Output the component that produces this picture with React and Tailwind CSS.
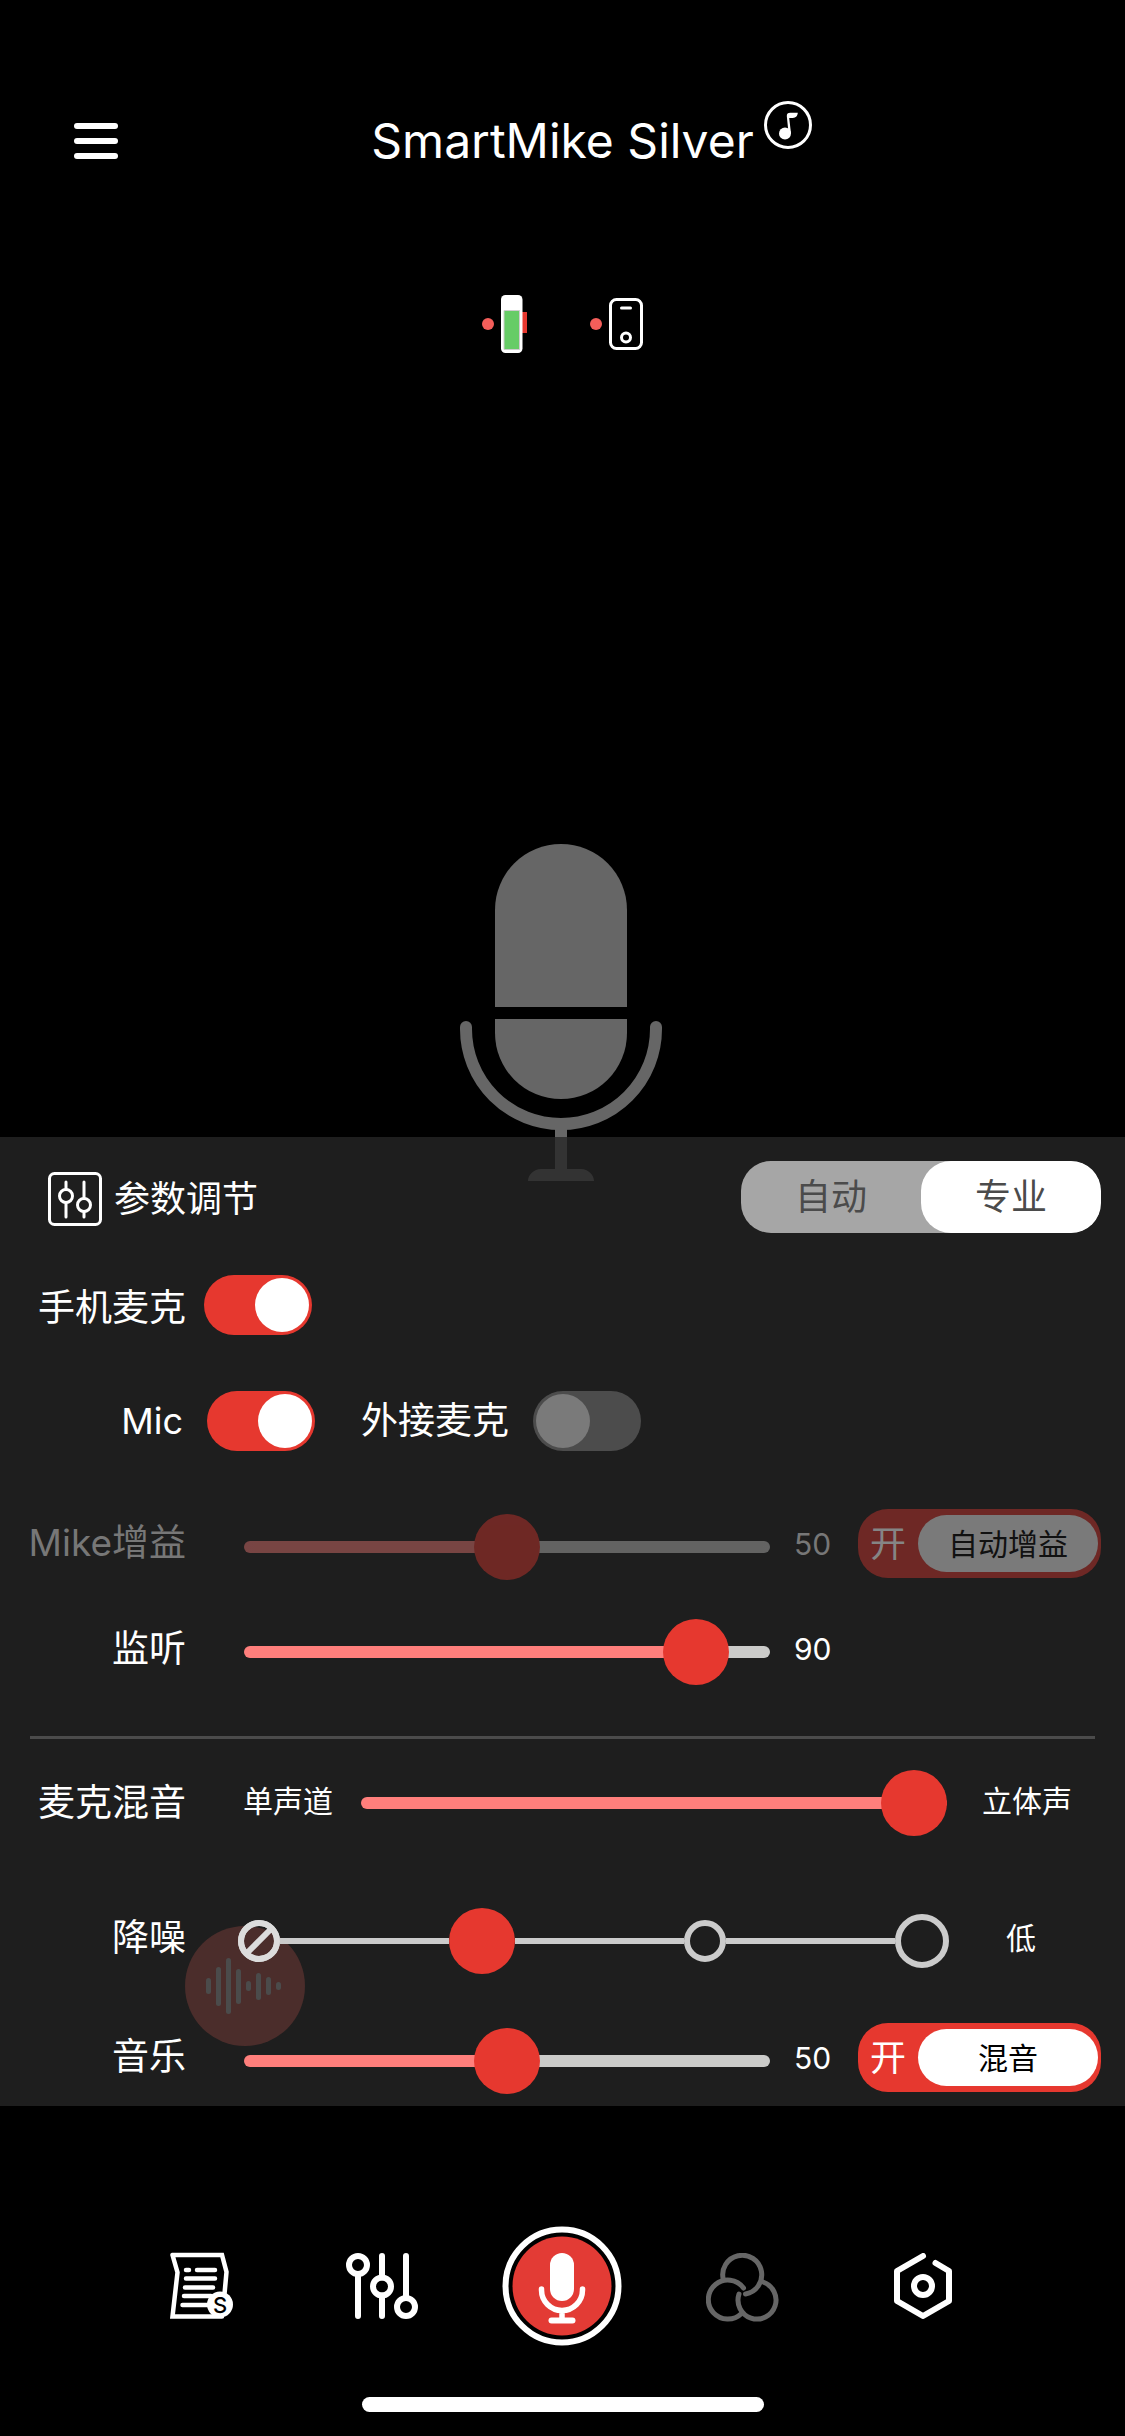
import { Fragment, useState } from "react";

function Range({ label, level, disabled = false }) {
  const [value, setValue] = useState(level);
  return (
    <input
      type="range"
      aria-label={label}
      min="0"
      max="100"
      value={value}
      disabled={disabled}
      onChange={(e) => setValue(Number(e.target.value))}
      style={{ "--p": `${value}%` }}
      className="block h-[66px] w-full min-w-0 appearance-none bg-transparent disabled:opacity-40 [&::-webkit-slider-runnable-track]:h-3 [&::-webkit-slider-runnable-track]:rounded-md [&::-webkit-slider-runnable-track]:bg-[linear-gradient(to_right,#ff7f7c_var(--p),#cbcbc9_var(--p))] [&::-webkit-slider-thumb]:-mt-[27px] [&::-webkit-slider-thumb]:size-[66px] [&::-webkit-slider-thumb]:appearance-none [&::-webkit-slider-thumb]:rounded-full [&::-webkit-slider-thumb]:bg-[#e6382f]"
    />
  );
}

function Switch({ id, on = false, disabled = false }) {
  return (
    <input
      id={id}
      type="checkbox"
      role="switch"
      defaultChecked={on}
      disabled={disabled}
      className="h-[60px] w-[108px] shrink-0 appearance-none rounded-full bg-[#4c4c4c] p-[3px] before:block before:size-[54px] before:rounded-full before:bg-[#7a7a7a] checked:bg-[#e6382f] checked:before:ml-auto checked:before:bg-white"
    />
  );
}

function Pill({ text, disabled = false }) {
  return (
    <button
      type="button"
      disabled={disabled}
      className="mb-1.5 flex h-[69px] w-full items-center rounded-[30px] bg-[#e6382f] pr-[3px] pl-3 disabled:bg-[#6e2825] disabled:text-[#858585]"
    >
      <span className="w-12 text-left text-4xl">开</span>
      <span
        className={
          disabled
            ? "flex h-[57px] flex-1 items-center justify-center rounded-full bg-[#7a7a7a] text-3xl text-[#111111]"
            : "flex h-[57px] flex-1 items-center justify-center rounded-full bg-white text-3xl text-black"
        }
      >
        {text}
      </span>
    </button>
  );
}

function Label({ children, dim = false }) {
  return (
    <span
      className={
        dim
          ? "w-[186px] shrink-0 pb-1.5 text-right text-[37px] whitespace-nowrap text-[#777777]"
          : "w-[186px] shrink-0 pb-1.5 text-right text-[37px] whitespace-nowrap"
      }
    >
      {children}
    </span>
  );
}

function LevelRow({ label, value, level, pill, disabled = false }) {
  return (
    <div className="grid h-[72px] grid-cols-[186px_1fr_40px_243px] items-center gap-x-6 pr-6">
      <Label dim={disabled}>{label}</Label>
      <div className="pl-[34px]">
        <Range label={label} level={level} disabled={disabled} />
      </div>
      <output className={disabled ? "pb-1.5 text-3xl text-[#777777]" : "pb-1.5 text-3xl"}>{value}</output>
      {pill && <Pill text={pill} disabled={disabled} />}
    </div>
  );
}

function NoiseSteps() {
  const [step, setStep] = useState(1);
  const ring = ["size-[42px]", "size-[42px]", "size-[42px]", "size-[54px]"];
  const names = ["关", "低", "中", "高"];
  return (
    <div role="radiogroup" aria-label="降噪" className="relative z-10 ml-[52px] flex flex-1 items-center">
      {names.map((name, i) => (
        <Fragment key={name}>
          {i > 0 && <div className="h-1.5 flex-1 bg-[#cbcbcb]" />}
          <div className="grid place-items-center">
            <input
              type="radio"
              name="noise"
              aria-label={name}
              checked={step === i}
              onChange={() => setStep(i)}
              className={`${ring[i]} col-start-1 row-start-1 appearance-none rounded-full border-[6px] border-[#cbcbcb] checked:size-[66px] checked:border-0 checked:bg-[#e6382f]`}
            />
            {i === 0 && step !== 0 && (
              <svg viewBox="0 0 42 42" className="pointer-events-none col-start-1 row-start-1 size-[42px]" fill="none" stroke="#dcdcdc" strokeWidth="6">
                <circle cx="21" cy="21" r="18" />
                <path d="M8.500 33.500 33.500 8.500" />
              </svg>
            )}
          </div>
        </Fragment>
      ))}
    </div>
  );
}

function BigMic() {
  return (
    <svg viewBox="0 0 202 338" className="h-[338px] w-[202px]" fill="#666666">
      <path d="M35 163V66a66 66 0 0 1 132 0v97z" />
      <path d="M35 175h132v14a66 66 0 0 1-132 0z" />
      <path d="M6 183v2a95 95 0 0 0 190 0v-2" fill="none" stroke="#666666" strokeWidth="12" strokeLinecap="round" />
      <path d="M95 280h12v45h14c7 0 13 6 13 12H68c0-6 6-12 13-12h14z" />
    </svg>
  );
}

const waves = [16, 39, 56, 35, 10, 27, 18, 8];

export default function App() {
  const [mode, setMode] = useState("pro");
  return (
    <div className="flex min-h-screen flex-col bg-black font-['Inter','Noto_Sans_CJK_SC',sans-serif] leading-[1.2] text-white">
      <header className="grid grid-cols-[1fr_auto_1fr] pt-[101px]">
        <div className="flex items-center pl-[74px]">
          <button type="button" aria-label="菜单" className="flex flex-col gap-[9px]">
            <span className="h-1.5 w-11 rounded-full bg-white" />
            <span className="h-1.5 w-11 rounded-full bg-white" />
            <span className="h-1.5 w-11 rounded-full bg-white" />
          </button>
        </div>
        <h1 className="text-5xl leading-[80px]">SmartMike Silver</h1>
        <button type="button" aria-label="音乐" className="ml-2.5 size-12">
          <svg viewBox="0 0 48 48" className="size-12">
            <circle cx="24" cy="24" r="22.500" fill="none" stroke="white" strokeWidth="3" />
            <circle cx="21" cy="32.500" r="6" fill="white" />
            <path d="M24.500 32 22.800 15c0-2.500 1-3.200 3.500-3.200h7.500c-.2 3-1.800 5.200-5 5.200h-3.600l1.800 15.500z" fill="white" />
          </svg>
        </button>
      </header>

      <div className="mt-[114px] flex items-center justify-center gap-[62px]">
        <div className="flex items-center">
          <span className="mr-[7px] size-3 rounded-full bg-[#f45e5a]" />
          <svg viewBox="0 0 27 58" className="h-[58px] w-[27px]">
            <path d="M20 17h6v21h-6z" fill="#e6382f" />
            <rect width="21.500" height="58" rx="4.500" fill="white" />
            <path d="M3 15.500h15.500v39H3z" fill="#66cc66" stroke="#cccccc" />
          </svg>
        </div>
        <div className="flex items-center">
          <span className="mr-[7px] size-3 rounded-full bg-[#f45e5a]" />
          <svg viewBox="0 0 34 52" className="h-[52px] w-[34px]" fill="none" stroke="white">
            <rect x="1.500" y="1.500" width="31" height="49" rx="6" strokeWidth="3" />
            <path d="M12.500 10h9" strokeWidth="3" strokeLinecap="round" />
            <circle cx="17" cy="39.500" r="4.500" strokeWidth="3" />
          </svg>
        </div>
      </div>

      <div className="flex min-h-[491px] flex-1 items-end justify-center pr-1">
        <div className="-mb-[45px]">
          <BigMic />
        </div>
      </div>

      <main className="relative bg-[#262626]/79 pt-6 pb-[11px]">
        <button
          type="button"
          aria-label="音频"
          className="absolute top-[789px] left-[185px] flex size-[120px] items-center justify-center gap-[5px] rounded-full bg-[#4b2d2b] pr-1"
        >
          {waves.map((h, i) => (
            <span key={i} className="w-[5px] rounded-full bg-[#4b4b4b]" style={{ height: h }} />
          ))}
        </button>

        <div className="flex h-[72px] items-center pr-6 pl-12">
          <div className="flex items-center gap-3 pt-1">
            <svg viewBox="0 0 54 54" className="size-[54px]" fill="none" stroke="white">
              <rect x="1.500" y="1.500" width="51" height="51" rx="5" strokeWidth="3" />
              <g strokeWidth="3" strokeLinecap="round">
                <path d="M18 10v7M18 31v14M36 10v16M36 40v5" />
                <circle cx="18" cy="24" r="6.500" />
                <circle cx="36" cy="33" r="6.500" />
              </g>
            </svg>
            <h2 className="text-4xl">参数调节</h2>
          </div>
          <div className="ml-auto flex h-[72px] w-[360px] overflow-hidden rounded-[30px] bg-[#a6a6a6] text-4xl text-[#4b4b4b]">
            <button
              type="button"
              aria-pressed={mode === "auto"}
              onClick={() => setMode("auto")}
              className="flex-1 rounded-[30px] aria-pressed:bg-white"
            >
              自动
            </button>
            <button
              type="button"
              aria-pressed={mode === "pro"}
              onClick={() => setMode("pro")}
              className="flex-1 rounded-[30px] aria-pressed:bg-white"
            >
              专业
            </button>
          </div>
        </div>

        <div className="mt-[42px] flex items-center gap-[18px]">
          <label htmlFor="phone-mic" className="w-[186px] pt-1.5 text-right text-[37px]">手机麦克</label>
          <Switch id="phone-mic" on />
        </div>

        <div className="mt-14 flex items-center gap-6">
          <label htmlFor="mic" className="w-[183px] text-right text-4xl">Mic</label>
          <Switch id="mic" on />
          <label htmlFor="external-mic" className="pl-[22px] text-[37px]">外接麦克</label>
          <Switch id="external-mic" disabled />
        </div>

        <div className="mt-[58px] mb-12 flex flex-col gap-[35px]">
          <LevelRow label="Mike增益" value="50" level={50} pill="自动增益" disabled />
          <LevelRow label="监听" value="90" level={91} />
        </div>

        <hr className="mx-[30px] border-t-[3px] border-[#4b4b4b]" />

        <div className="mt-7 flex h-[72px] items-center pr-[18px]">
          <span className="w-[186px] text-right text-[37px]">麦克混音</span>
          <span className="mr-7 ml-[57px] pb-1 text-3xl">单声道</span>
          <div className="flex-1">
            <Range label="麦克混音" level={100} />
          </div>
          <span className="w-40 pb-1 text-center text-3xl">立体声</span>
        </div>

        <div className="mt-[66px] flex h-[72px] items-center pr-8">
          <Label>降噪</Label>
          <NoiseSteps />
          <span className="w-36 pb-1.5 text-center text-3xl">低</span>
        </div>

        <div className="relative mt-[46px]">
          <LevelRow label="音乐" value="50" level={50} pill="混音" />
        </div>
      </main>

      <nav className="grid grid-cols-5 place-items-center px-28 pt-[120px]">
        <button type="button" aria-label="台词">
          <svg viewBox="0 0 64 68" className="h-[68px] w-16" fill="none" stroke="white" strokeLinecap="round">
            <path d="M2.500 3H52l4.500 17-2 22M2.500 3l5 17.500-5 44H52" strokeWidth="4.500" />
            <path d="M16 18h3M27 18h18M16 26.500h29M15 35.500h28M14 44h27M12.500 53h26" strokeWidth="4.500" />
            <circle cx="50" cy="52.500" r="13" fill="white" stroke="none" />
            <text x="50" y="60.500" textAnchor="middle" fontSize="22" fontWeight="500" fill="black" stroke="none">S</text>
          </svg>
        </button>
        <button type="button" aria-label="参数">
          <svg viewBox="0 0 72 66" className="h-[66px] w-[72px]" fill="none" stroke="white" strokeWidth="6" strokeLinecap="round">
            <circle cx="12" cy="12" r="9" />
            <circle cx="36" cy="33.500" r="9" />
            <circle cx="60" cy="54" r="9" />
            <path d="M12 21v42M36 3v21.500M36 42.500V63M60 3v42" />
          </svg>
        </button>
        <button type="button" aria-label="录音">
          <svg viewBox="0 0 120 120" className="size-[120px]" fill="none">
            <circle cx="60" cy="60" r="56.500" stroke="white" strokeWidth="6" />
            <circle cx="60" cy="60" r="49.500" fill="#e33b35" />
            <rect x="48" y="27" width="24" height="48" rx="12" fill="white" />
            <path d="M39.500 63v1a20.500 20.500 0 0 0 41 0v-1M60 85v9" stroke="white" strokeWidth="5.500" strokeLinecap="round" />
            <path d="M49.500 94.500h21" stroke="white" strokeWidth="6" strokeLinecap="round" />
          </svg>
        </button>
        <button type="button" aria-label="滤镜" className="pt-1">
          <svg viewBox="0 0 73 70" className="h-[70px] w-[73px]" fill="none" stroke="#666666" strokeWidth="5" strokeLinecap="round">
            <path d="M17.300 26.500A19.500 19.500 0 1 1 39.500 41" />
            <path d="M37.500 35A19.500 19.500 0 1 0 35.500 60.500" />
            <path d="M33 41A19 19 0 1 0 57 29" />
          </svg>
        </button>
        <button type="button" aria-label="设置">
          <svg viewBox="0 0 58 66" className="h-[66px] w-[58px]" fill="none" stroke="white" strokeWidth="6" strokeLinecap="round" strokeLinejoin="round">
            <path d="M29 3 3 18v30l26 15 26-15V18L41.500 10" />
            <circle cx="29" cy="33" r="9" />
          </svg>
        </button>
      </nav>
      <div className="mx-auto mt-[51px] mb-6 h-[15px] w-[402px] rounded-full bg-white" />
    </div>
  );
}
